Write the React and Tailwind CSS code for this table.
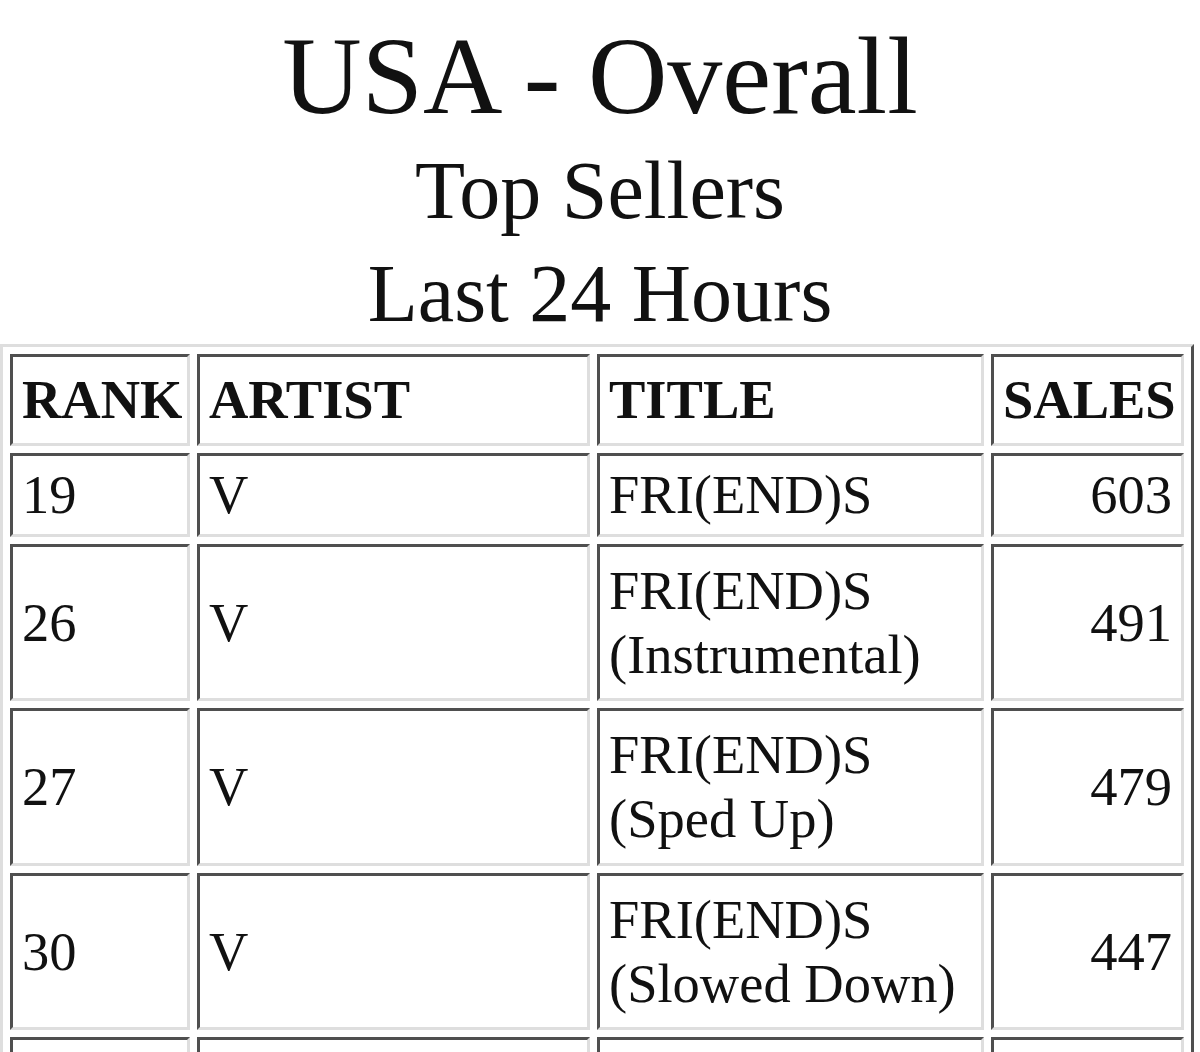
import React from 'react';

const rows = [
  { rank: '19', artist: 'V', title: ['FRI(END)S'], sales: '603', h: 'h-[82px]' },
  { rank: '26', artist: 'V', title: ['FRI(END)S', '(Instrumental)'], sales: '491', h: 'h-[157px]' },
  { rank: '27', artist: 'V', title: ['FRI(END)S', '(Sped Up)'], sales: '479', h: 'h-[158px]' },
  { rank: '30', artist: 'V', title: ['FRI(END)S', '(Slowed Down)'], sales: '447', h: 'h-[157px]' },
];

const cell =
  'border-[3px] border-solid border-t-[#4f4f4f] border-l-[#4f4f4f] border-b-[#dedede] border-r-[#dedede] px-[9px] py-[7px] align-middle';

export default function App() {
  return (
    <div className="min-h-screen bg-white text-[#111] font-['Liberation_Serif',serif]">
      {/* Heading */}
      <div className="pt-[14px] text-center">
        <h1 className="text-[110px] leading-[124px] font-normal">USA - Overall</h1>
        <div className="text-[82px] leading-[105px]">Top Sellers</div>
        <div className="text-[82px] leading-[101px]">Last 24 Hours</div>
      </div>

      {/* Sales table */}
      <table className="table-fixed w-[1194px] border-separate border-spacing-x-[7px] border-spacing-y-[7px] border-[3px] border-solid border-t-[#dedede] border-l-[#dedede] border-b-[#4f4f4f] border-r-[#4f4f4f] text-[54.5px] leading-[64px]">
        <thead>
          <tr className="h-[92px]">
            <th className={`${cell} w-[180px] text-left font-bold`}>RANK</th>
            <th className={`${cell} w-[393px] text-left font-bold`}>ARTIST</th>
            <th className={`${cell} w-[387px] text-left font-bold`}>TITLE</th>
            <th className={`${cell} w-[193px] text-left font-bold`}>SALES</th>
          </tr>
        </thead>
        <tbody>
          {rows.map((r) => (
            <tr key={r.rank} className={r.h}>
              <td className={cell}>{r.rank}</td>
              <td className={cell}>{r.artist}</td>
              <td className={cell}>
                {r.title.map((t, i) => (
                  <div key={i}>{t}</div>
                ))}
              </td>
              <td className={`${cell} text-right`}>{r.sales}</td>
            </tr>
          ))}
          <tr className="h-[157px]">
            <td className={cell}>&nbsp;</td>
            <td className={cell}>&nbsp;</td>
            <td className={cell}>&nbsp;</td>
            <td className={cell}>&nbsp;</td>
          </tr>
        </tbody>
      </table>
    </div>
  );
}
